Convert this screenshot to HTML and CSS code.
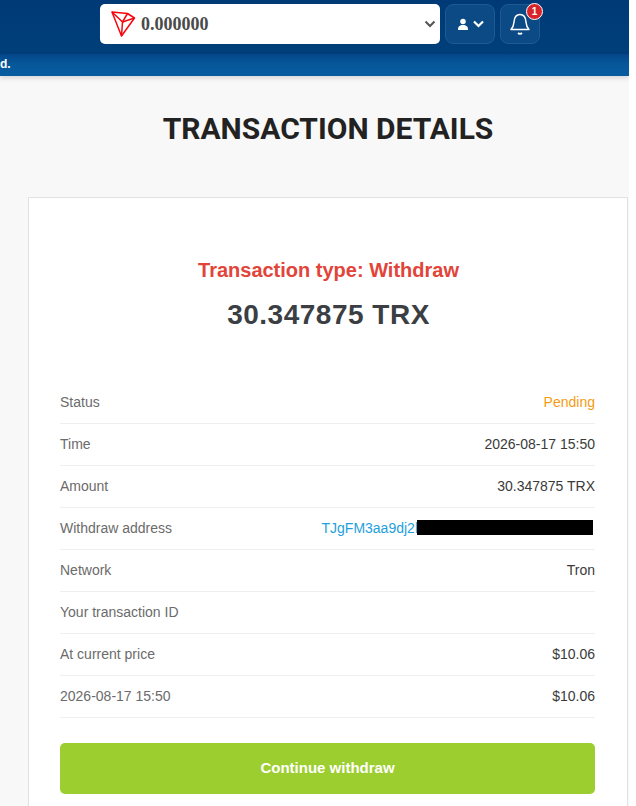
FILE: index.html
```html
<!DOCTYPE html>
<html lang="en">
<head>
    <meta charset="UTF-8">
    <meta name="viewport" content="width=device-width, initial-scale=1.0">
    <title>Transaction details</title>
    <link rel="stylesheet" href="styles.css">
</head>
<body>
    <div class="page">
        <header class="topbar">
            <div class="balance">
                <svg class="trx-logo" width="25" height="26" viewBox="0 0 25 26" fill="none" stroke="#f5070f" stroke-width="1.5" stroke-linejoin="round">
                    <path d="M1 1 L10.5 25 L23.5 7 L16.5 2.5 Z"/>
                    <path d="M1 1 L11.5 11 L10.5 25"/>
                    <path d="M11.5 11 L23.5 7"/>
                    <path d="M11.5 11 L16.5 2.5"/>
                </svg>
                <span class="balance-value">0.000000</span>
                <svg class="balance-arrow" width="12" height="8" viewBox="0 0 12 8" fill="none" stroke="#555" stroke-width="2">
                    <path d="M1.5 1.5 L6 6 L10.5 1.5"/>
                </svg>
            </div>
            <div class="icon-btn user-btn">
                <svg width="12" height="13" viewBox="0 0 13 13" fill="#fff">
                    <circle cx="6.5" cy="3.2" r="3"/>
                    <path d="M1 12.5 C1 8.5 3 7 6.5 7 C10 7 12 8.5 12 12.5 Z"/>
                </svg>
                <svg width="11" height="8" viewBox="0 0 11 8" fill="none" stroke="#fff" stroke-width="2.2">
                    <path d="M1 1.5 L5.5 6 L10 1.5"/>
                </svg>
            </div>
            <div class="icon-btn bell-btn">
                <svg width="20" height="24" viewBox="0 0 20 24" fill="none" stroke="#fff" stroke-width="1.5">
                    <path d="M1 17.5 H19 C17 15.5 16.3 14 16 10 C15.7 5.5 13.5 2.5 10 2.5 C6.5 2.5 4.3 5.5 4 10 C3.7 14 3 15.5 1 17.5 Z" stroke-linejoin="round"/>
                    <path d="M8 21 C9 22 11 22 12 21" stroke-width="1.8"/>
                </svg>
                <span class="badge">1</span>
            </div>
        </header>
        <div class="ticker">
            <span class="ticker-text">d.</span>
        </div>

        <main class="content">
            <h1 class="title">TRANSACTION DETAILS</h1>

            <section class="card">
                <h2 class="tx-type">Transaction type: Withdraw</h2>
                <div class="tx-amount">30.347875 TRX</div>

                <div class="rows">
                    <div class="row"><span class="label">Status</span><span class="pending">Pending</span></div>
                    <div class="row"><span class="label">Time</span><span>2026-08-17 15:50</span></div>
                    <div class="row"><span class="label">Amount</span><span>30.347875 TRX</span></div>
                    <div class="row"><span class="label">Withdraw address</span><span class="address">TJgFM3aa9dj2l<span class="redacted"></span></span></div>
                    <div class="row"><span class="label">Network</span><span>Tron</span></div>
                    <div class="row"><span class="label">Your transaction ID</span><span></span></div>
                    <div class="row"><span class="label">At current price</span><span>$10.06</span></div>
                    <div class="row"><span class="label">2026-08-17 15:50</span><span>$10.06</span></div>
                </div>

                <button class="continue-btn" type="button">Continue withdraw</button>
            </section>
        </main>
    </div>
</body>
</html>
```

FILE: styles.css
```css
html, body {
    margin: 0;
    padding: 0;
    background-color: #fff;
    height: 806px;
    overflow: hidden;
}

body {
    font-family: 'Liberation Sans', Arial, sans-serif;
    color: #333;
}

.page {
    width: 629px;
    height: 806px;
    overflow: hidden;
    background-color: #f8f8f8;
}

.topbar {
    display: flex;
    align-items: flex-start;
    gap: 5px;
    box-sizing: border-box;
    height: 54px;
    padding: 4px 0 0 100px;
    background: linear-gradient(#003a76, #003f7b);
}

.balance {
    display: flex;
    align-items: center;
    box-sizing: border-box;
    width: 340px;
    height: 40px;
    padding: 0 4px 0 11px;
    background-color: #fff;
    border-radius: 5px;
}

.trx-logo {
    flex: none;
}

.balance-value {
    flex: 1;
    margin-left: 5px;
    font-family: 'Liberation Serif', serif;
    font-size: 18px;
    font-weight: bold;
    color: #4a4a4a;
}

.icon-btn {
    position: relative;
    display: flex;
    align-items: center;
    justify-content: center;
    box-sizing: border-box;
    height: 40px;
    background-color: #0b4a85;
    border: 1px solid #1c5a94;
    border-radius: 8px;
}

.user-btn {
    width: 50px;
    gap: 4px;
}

.bell-btn {
    width: 40px;
}

.badge {
    position: absolute;
    top: -2px;
    right: -4px;
    width: 15px;
    height: 15px;
    line-height: 15px;
    text-align: center;
    font-size: 10px;
    font-weight: bold;
    color: #fff;
    background-color: #d9232a;
    border: 1.5px solid #fff;
    border-radius: 50%;
}

.ticker {
    height: 22px;
    line-height: 18px;
    background: linear-gradient(#03478a, #06589b 50%, #075c9f);
    box-shadow: 0 2px 5px rgba(0, 0, 0, 0.15);
    overflow: hidden;
}

.ticker-text {
    font-size: 12px;
    font-weight: bold;
    color: #fff;
}

.content {
    padding: 0 0 0 28px;
}

.title {
    margin: 0;
    padding: 35px 1px 50px 0;
    text-align: center;
    font-family: Roboto, sans-serif;
    font-size: 30px;
    line-height: 36px;
    font-weight: bold;
    color: #222;
}

.card {
    box-sizing: border-box;
    width: 600px;
    height: 700px;
    padding: 60px 32px 0 31px;
    background-color: #fff;
    border: 1px solid #e2e2e2;
}

.tx-type {
    margin: 0;
    padding-left: 2px;
    text-align: center;
    font-size: 20px;
    line-height: 24px;
    font-weight: bold;
    color: #e2443a;
}

.tx-amount {
    margin-top: 16px;
    padding-left: 2px;
    text-align: center;
    font-size: 28px;
    line-height: 34px;
    font-weight: bold;
    letter-spacing: 0.5px;
    color: #3b3f44;
}

.rows {
    margin-top: 50px;
}

.row {
    display: flex;
    justify-content: space-between;
    align-items: center;
    box-sizing: border-box;
    height: 42px;
    padding-bottom: 2px;
    font-size: 14px;
    color: #3a3a3a;
    border-bottom: 1px solid #efefef;
}

.label {
    color: #6b6b6b;
}

.pending {
    color: #f39c12;
}

.address {
    display: flex;
    align-items: center;
    padding-right: 2px;
    color: #1ea1dc;
}

.redacted {
    display: block;
    width: 176px;
    height: 15px;
    margin-left: -1px;
    background-color: #000;
}

.continue-btn {
    display: block;
    width: 100%;
    height: 51px;
    margin-top: 25px;
    padding-bottom: 3px;
    font-family: inherit;
    font-size: 15px;
    font-weight: bold;
    color: #fff;
    background-color: #9bce2e;
    border: none;
    border-radius: 5px;
    cursor: pointer;
}
```
